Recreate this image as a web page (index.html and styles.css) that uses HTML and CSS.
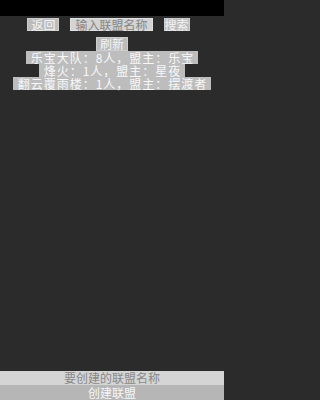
FILE: index.html
```html
<!DOCTYPE html>
<html>
<head>
<meta charset="utf-8">
<link rel="stylesheet" href="styles.css">
</head>
<body>
<div class="status"></div>
<main class="main">
  <div class="toolbar">
    <span class="btn btn-back">返回</span>
    <span class="input-top">输入联盟名称</span>
    <span class="btn btn-search">搜索</span>
  </div>
  <span class="btn btn-refresh">刷新</span>
  <ul class="list">
    <li class="row">乐宝大队：8人，盟主：乐宝</li>
    <li class="row">烽火：1人，盟主：星夜</li>
    <li class="row">翻云覆雨楼：1人，盟主：摆渡者</li>
  </ul>
</main>
<footer class="footer">
  <div class="name-input">要创建的联盟名称</div>
  <div class="create-btn">创建联盟</div>
</footer>
</body>
</html>
```
FILE: styles.css
```css
html, body {
  margin: 0;
  padding: 0;
}
body {
  width: 224px;
  height: 400px;
  background: #2b2b2b;
  font-family: "Noto Sans CJK SC", "Noto Sans", sans-serif;
  font-size: 12px;
  line-height: 13px;
  display: flex;
  flex-direction: column;
  overflow: hidden;
}
.status {
  height: 16px;
  background: #000;
  flex: none;
}
.main {
  flex: 1;
  display: flex;
  flex-direction: column;
  align-items: center;
}
.toolbar {
  display: flex;
  gap: 11px;
  margin-top: 2px;
  padding-right: 7px;
  height: 13px;
}
.btn {
  display: block;
  background: #bcbcbc;
  color: #f4f4f4;
  border: 1px solid #cdcdcd;
  box-sizing: border-box;
  height: 13px;
  line-height: 11px;
  white-space: nowrap;
}
.btn-back {
  padding: 0 3px;
}
.btn-search {
  padding: 0 0;
}
.btn-refresh {
  margin-top: 6px;
  padding: 0 3px;
  height: 14px;
  line-height: 12px;
}
.input-top {
  display: block;
  background: #d3d3d3;
  color: #878787;
  border: 1px solid #e0e0e0;
  box-sizing: border-box;
  padding: 0 4px;
  height: 13px;
  line-height: 11px;
  white-space: nowrap;
}
.list {
  list-style: none;
  margin: 0;
  padding: 0;
  display: flex;
  flex-direction: column;
  align-items: center;
}
.row {
  background: #bdbdbd;
  color: #f8f8f8;
  padding: 0 4px 0 5px;
  letter-spacing: 1px;
  height: 13px;
  white-space: nowrap;
}
.footer {
  flex: none;
  display: flex;
  flex-direction: column;
}
.name-input {
  height: 14px;
  background: #d5d5d5;
  color: #898989;
  text-align: center;
  line-height: 14px;
}
.create-btn {
  height: 15px;
  background: #b6b6b6;
  color: #f6f6f6;
  text-align: center;
  line-height: 15px;
}
```
